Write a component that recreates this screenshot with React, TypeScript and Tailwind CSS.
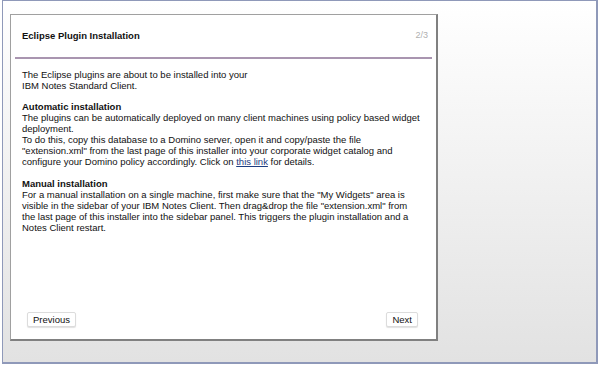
import React from "react";

const font = { fontFamily: '"Liberation Sans", Arial, sans-serif' };

export default function App() {
  return (
    <div className="w-[600px] h-[368px] bg-white pl-[2px]" style={font}>
      <div className="w-[596px] h-[364px] border border-[#8f99b9] border-r-2 border-b-2 bg-gradient-to-b from-white to-[#e2e2e2] pl-[7px] pt-[13px]">
        <div className="w-[428px] h-[327px] bg-white border border-[#a0a0a0] border-r-2 border-b-2 border-r-[#808080] border-b-[#808080] flex flex-col text-[#111]">
          <div className="h-[42px] flex items-center justify-between pl-[11px] pr-[8px]">
            <span className="text-[9.5px] font-bold">Eclipse Plugin Installation</span>
            <span className="text-[9px] text-[#b0b0b0]">2/3</span>
          </div>
          <div className="mx-[4px] h-[2px] bg-[#a995b0]" />
          <div className="pl-[11px] pt-[10px] text-[9.5px] leading-[11px] flex-1">
            <p>
              The Eclipse plugins are about to be installed into your
              <br />
              IBM Notes Standard Client.
            </p>
            <p className="mt-[10px] font-bold">Automatic installation</p>
            <p>
              The plugins can be automatically deployed on many client machines using policy based widget
              <br />
              deployment.
              <br />
              To do this, copy this database to a Domino server, open it and copy/paste the file
              <br />
              "extension.xml" from the last page of this installer into your corporate widget catalog and
              <br />
              configure your Domino policy accordingly. Click on{" "}
              <span className="text-[#1d3c80] underline">this link</span> for details.
            </p>
            <p className="mt-[11px] font-bold">Manual installation</p>
            <p>
              For a manual installation on a single machine, first make sure that the "My Widgets" area is
              <br />
              visible in the sidebar of your IBM Notes Client. Then drag&amp;drop the file "extension.xml" from
              <br />
              the last page of this installer into the sidebar panel. This triggers the plugin installation and a
              <br />
              Notes Client restart.
            </p>
          </div>
          <div className="flex justify-between pl-[16px] pr-[18px] pb-[12px]">
            <button className="h-[15px] px-[5px] text-[9.5px] bg-white border border-[#dcdcdc] rounded-[2px] shadow-[0_1px_1px_rgba(0,0,0,0.12)] leading-none">
              Previous
            </button>
            <button className="h-[15px] px-[5px] text-[9.5px] bg-white border border-[#dcdcdc] rounded-[2px] shadow-[0_1px_1px_rgba(0,0,0,0.12)] leading-none">
              Next
            </button>
          </div>
        </div>
      </div>
    </div>
  );
}
